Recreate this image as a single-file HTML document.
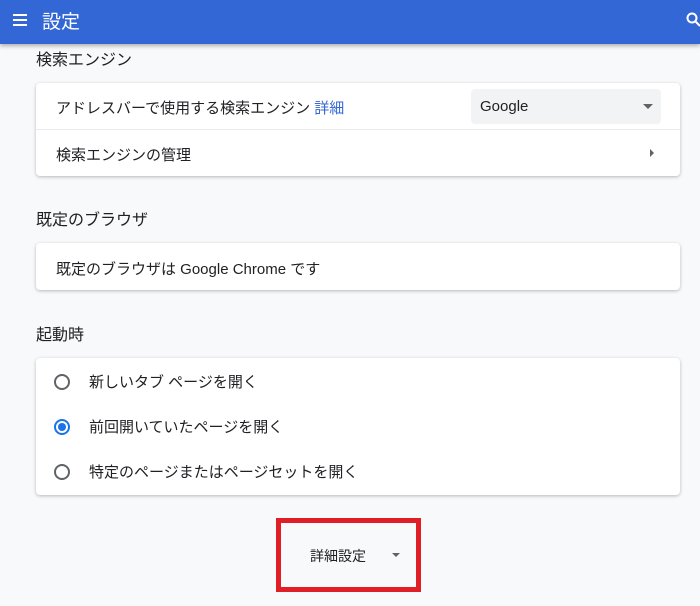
<!DOCTYPE html>
<html><head><meta charset="utf-8"><style>
body{margin:0;width:700px;height:606px;background:#f8f9fa;font-family:"Liberation Sans","Noto Sans CJK JP",sans-serif;color:#202124;position:relative;overflow:hidden;font-size:15px}
.hd{position:absolute;left:0;top:0;width:700px;height:44px;background:#3367d6;box-shadow:0 2px 4px rgba(0,0,0,.3)}
.hd .t{position:absolute;left:42px;top:7px;color:#fff;font-size:19px}
.card{position:absolute;left:36px;width:644px;background:#fff;border-radius:4px;box-shadow:0 1px 3px rgba(60,64,67,.35)}
.h{position:absolute;left:36px;font-size:16px;color:#202124}
.row{position:absolute;left:20px}
.abs{position:absolute}
.radio{position:absolute;left:18px;width:12px;height:12px;border:2px solid #5f6368;border-radius:50%}
</style></head><body>
<div class="hd">
<div class="abs" style="left:13px;top:14px;width:14px;height:2px;background:#fff;box-shadow:0 5px 0 #fff,0 10px 0 #fff"></div>
<div class="t">設定</div>
<svg class="abs" style="left:686px;top:12px" width="16" height="16"><circle cx="6" cy="6" r="4.5" stroke="#fff" stroke-width="2" fill="none"/><path d="M9.5 9.5L14 14" stroke="#fff" stroke-width="2"/></svg>
</div>
<div class="h" style="top:46px">検索エンジン</div>
<div class="card" style="top:83px;height:93px">
<div class="row" style="top:14px">アドレスバーで使用する検索エンジン <span style="color:#3367d6">詳細</span></div>
<div class="abs" style="left:435px;top:6px;width:190px;height:35px;background:#f1f3f4;border-radius:4px"><span class="abs" style="left:9px;top:9px">Google</span><div class="abs" style="left:172px;top:15px;border:5px solid transparent;border-top-color:#5f6368;border-bottom:0"></div></div>
<div class="abs" style="left:0;top:46px;width:644px;height:1px;background:#e8eaed"></div>
<div class="row" style="top:61px">検索エンジンの管理</div>
<div class="abs" style="left:614px;top:66px;border:4px solid transparent;border-left-color:#5f6368;border-right:0"></div>
</div>
<div class="h" style="top:206px">既定のブラウザ</div>
<div class="card" style="top:243px;height:47px"><div class="row" style="top:15px">既定のブラウザは Google Chrome です</div></div>
<div class="h" style="top:321px">起動時</div>
<div class="card" style="top:358px;height:137px">
<div class="radio" style="top:16px"></div><div class="abs" style="left:53px;top:13px">新しいタブ ページを開く</div>
<div class="radio" style="top:61px;border-color:#1a73e8"><div class="abs" style="left:2px;top:2px;width:8px;height:8px;border-radius:50%;background:#1a73e8"></div></div><div class="abs" style="left:53px;top:58px">前回開いていたページを開く</div>
<div class="radio" style="top:106px"></div><div class="abs" style="left:53px;top:103px">特定のページまたはページセットを開く</div>
</div>
<div class="abs" style="left:276px;top:518px;width:135px;height:64px;border:5px solid #e01e25"></div>
<div class="abs" style="left:310px;top:546px;font-size:14px">詳細設定</div>
<div class="abs" style="left:392px;top:553px;border:4px solid transparent;border-top-color:#5f6368;border-bottom:0"></div>
</body></html>
